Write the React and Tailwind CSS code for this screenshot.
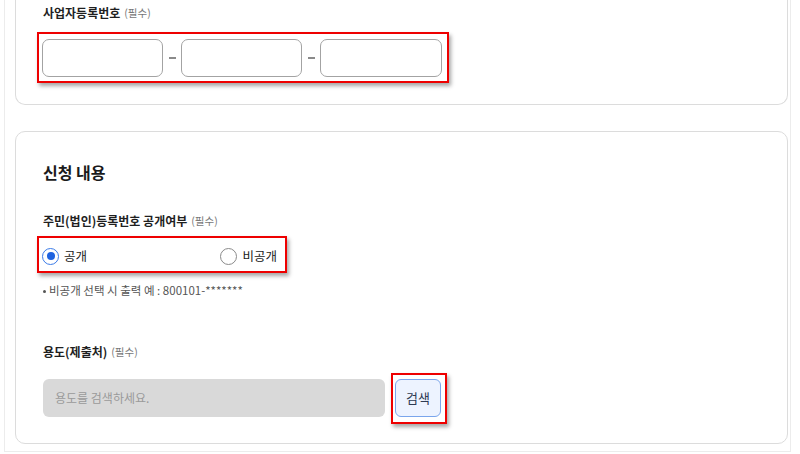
import React from "react";

const font = { fontFamily: '"Noto Sans CJK KR", "Noto Sans", sans-serif' };

function Label({ children }) {
  return (
    <div className="h-[18px] flex items-center text-[12px] font-bold text-[#1f1f1f] leading-none">
      <span>{children}</span>
      <span className="ml-[4px] text-[10.5px] font-normal text-[#777]">(필수)</span>
    </div>
  );
}

function Radio({ checked, label }) {
  return (
    <div className="flex items-center gap-[5px]">
      {checked ? (
        <span className="w-[17px] h-[17px] rounded-full border border-[#3b7be8] bg-white flex items-center justify-center">
          <span className="w-[8px] h-[8px] rounded-full bg-[#1f63e0]" />
        </span>
      ) : (
        <span className="w-[17px] h-[17px] rounded-full border border-[#8a8a8a] bg-white" />
      )}
      <span className="text-[12.5px] text-[#222] leading-none">{label}</span>
    </div>
  );
}

export default function App() {
  return (
    <div className="w-[800px] h-[454px] bg-white overflow-hidden" style={font}>
      <div className="ml-[4px] w-[787px] border-x border-b border-[#ececec] pl-[10px] pr-[2px] pb-[7px]">
        {/* Card 1 */}
        <div className="border-x border-b border-[#dcdcdc] rounded-b-[10px] pl-[27px] pt-[4px] pb-[21px]">
          <Label>사업자등록번호</Label>
          <div className="mt-[10px] -ml-[6px] w-[412px] border-2 border-[#ee0000] pl-[3px] pr-[5px] pt-[5px] pb-[4px] flex items-center shadow-[2px_3px_4px_rgba(0,0,0,0.35)]">
            <div className="w-[121px] h-[38px] rounded-[7px] border border-[#a3a3a3] bg-white" />
            <div className="w-[18px] flex justify-center">
              <span className="w-[7px] h-[1.5px] bg-[#8a8a8a]" />
            </div>
            <div className="w-[121px] h-[38px] rounded-[7px] border border-[#a3a3a3] bg-white" />
            <div className="w-[18px] flex justify-center">
              <span className="w-[7px] h-[1.5px] bg-[#8a8a8a]" />
            </div>
            <div className="w-[122px] h-[38px] rounded-[7px] border border-[#a3a3a3] bg-white" />
          </div>
        </div>

        {/* Card 2 */}
        <div className="mt-[26px] border border-[#dcdcdc] rounded-[10px] pl-[27px] pt-[28px] pb-[26px]">
          <div className="h-[24px] flex items-center text-[16px] font-bold text-[#1a1a1a]">신청 내용</div>

          <div className="mt-[28px]">
            <Label>주민(법인)등록번호 공개여부</Label>
          </div>
          <div className="mt-[6px] -ml-[6px] w-[250px] h-[37px] border-2 border-[#ee0000] pl-[3px] pr-[8px] pt-[3px] flex items-center justify-between shadow-[2px_3px_4px_rgba(0,0,0,0.35)]">
            <Radio checked label="공개" />
            <Radio label="비공개" />
          </div>

          <div className="mt-[9px] h-[18px] flex items-center text-[11.5px] text-[#555]">
            <span className="w-[3px] h-[3px] rounded-full bg-[#555] mr-[3px]" />
            비공개 선택 시 출력 예 : 800101-*******
          </div>

          <div className="mt-[43px]">
            <Label>용도(제출처)</Label>
          </div>
          <div className="mt-[18px] flex items-center gap-[10px]">
            <div className="w-[342px] h-[38px] rounded-[6px] bg-[#d9d9d9] flex items-center pl-[12px] text-[12px] text-[#9a9a9a]">
              용도를 검색하세요.
            </div>
            <div className="relative">
              <span className="absolute left-[-4px] right-[-6px] top-[-6px] bottom-[-7px] border-2 border-[#ee0000] shadow-[2px_3px_4px_rgba(0,0,0,0.35)]" />
              <button className="relative w-[46px] h-[38px] rounded-[6px] border border-[#7aa5ec] bg-[#edf3ff] text-[13px] text-[#2e3a52]">
                검색
              </button>
            </div>
          </div>
        </div>
      </div>
    </div>
  );
}
